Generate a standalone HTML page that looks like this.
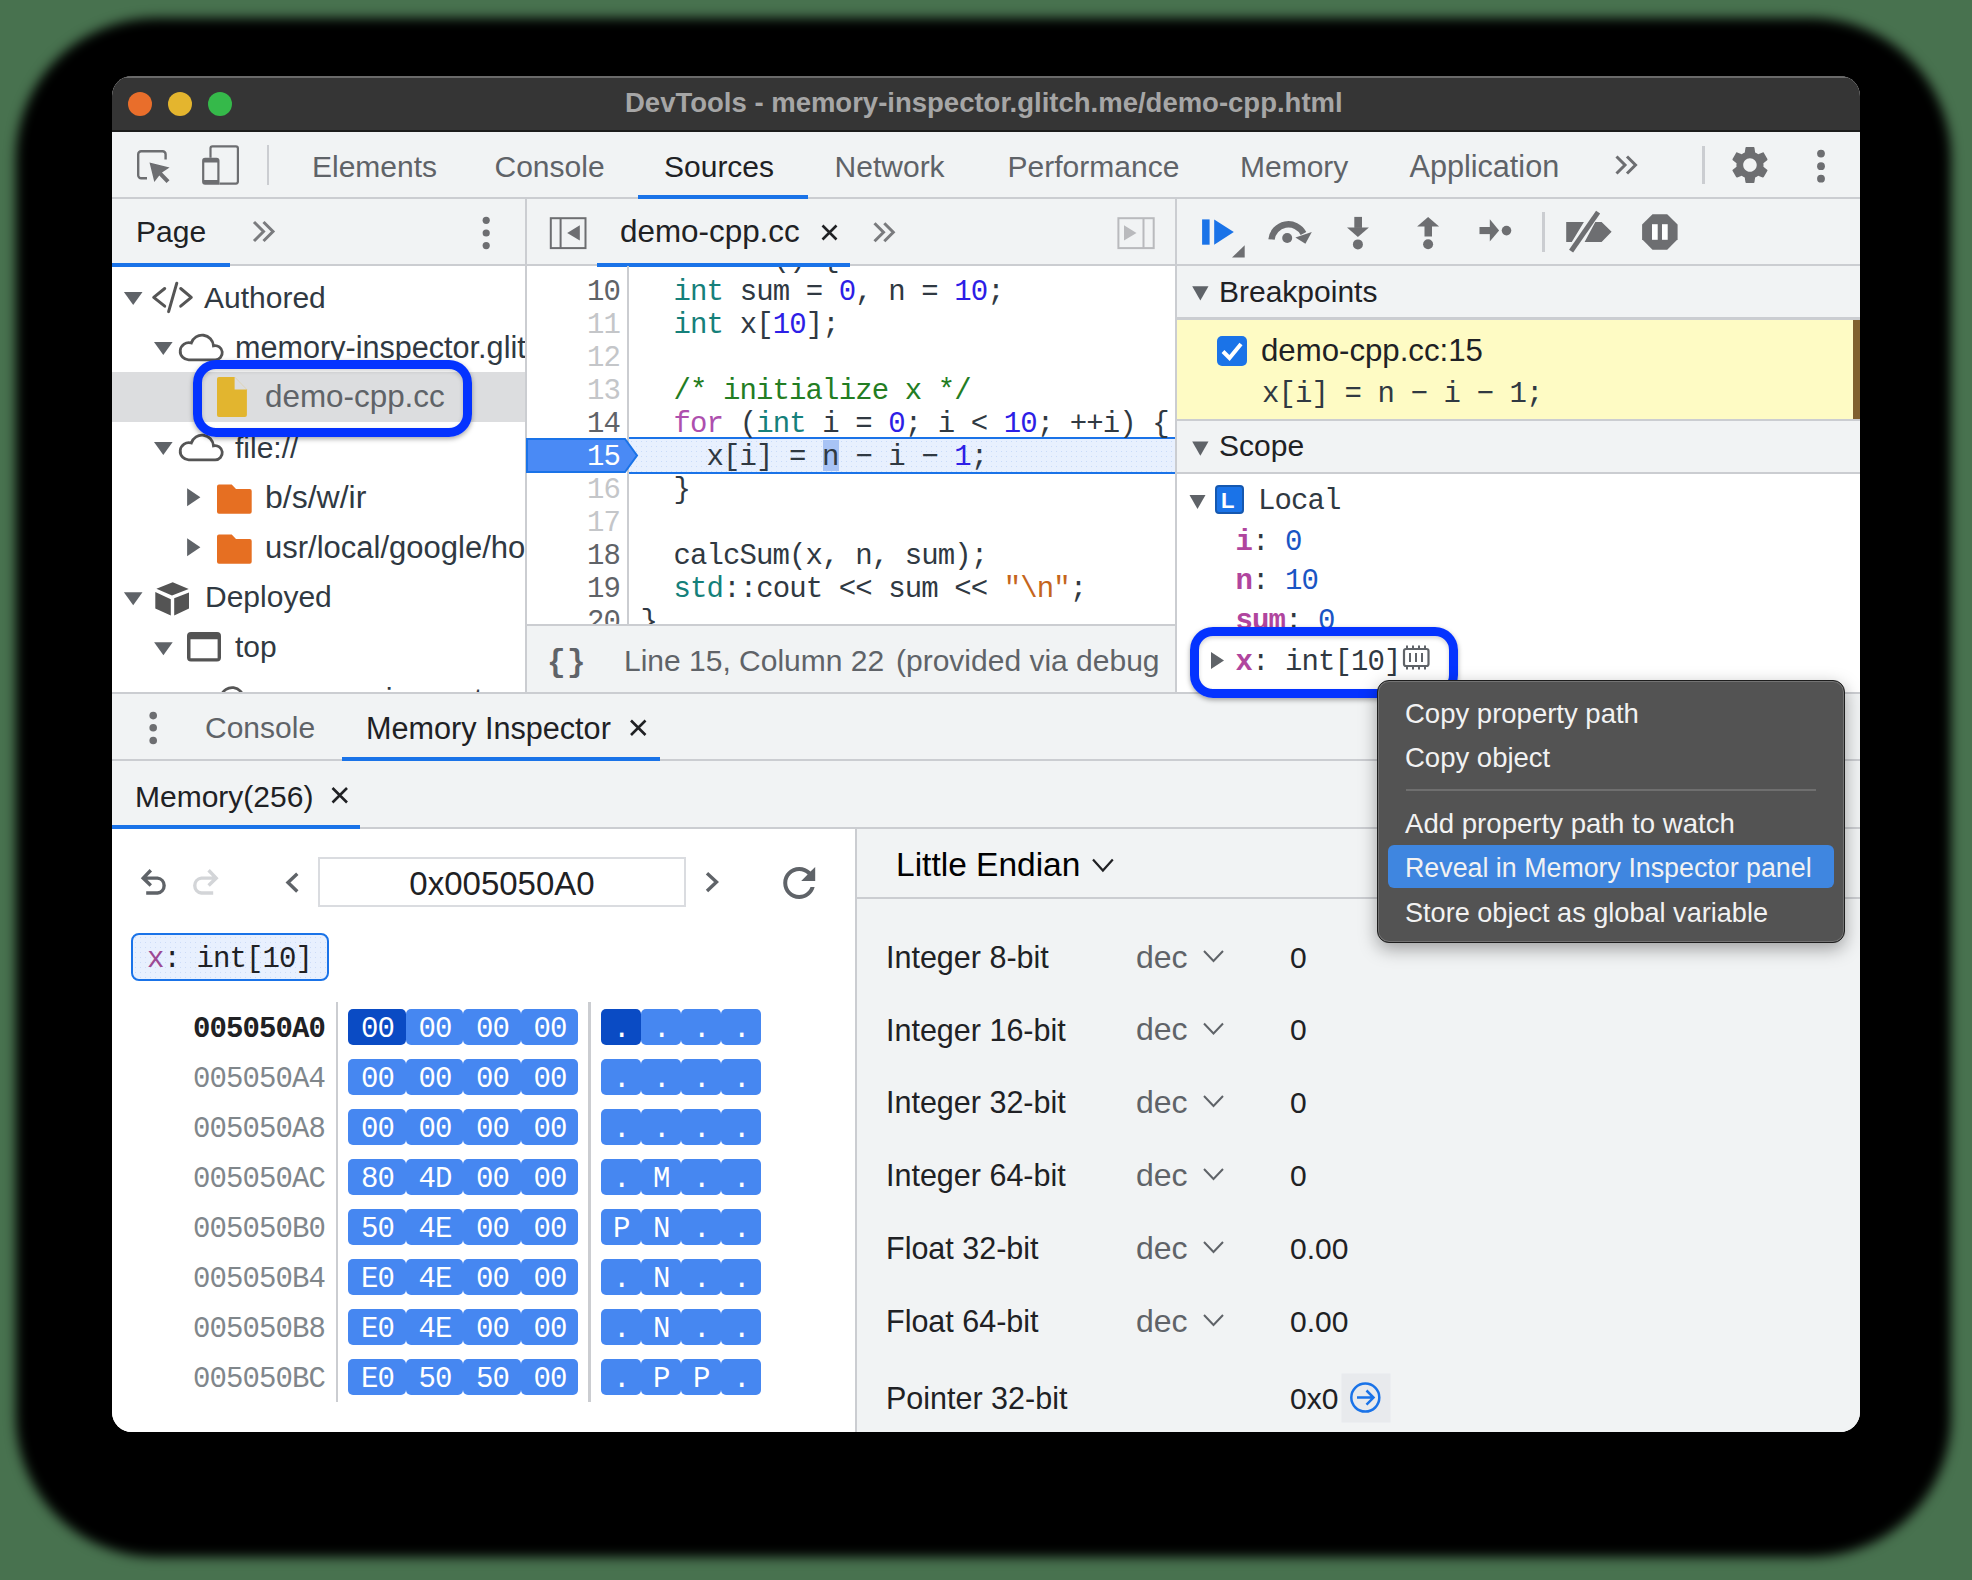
<!DOCTYPE html>
<html><head><meta charset="utf-8"><style>
html,body{margin:0;padding:0;}
body{width:1972px;height:1580px;overflow:hidden;background:#48724f;position:relative;}
body div{position:absolute;box-sizing:border-box;}
</style></head><body>
<div style="left:16px;top:18px;width:1935px;height:1539px;background:#000;border-radius:140px;filter:blur(6px)"></div><div style="left:112px;top:76px;width:1748px;height:1356px;border-radius:20px;overflow:hidden;background:#fff"><div style="left:-112px;top:-76px;width:1972px;height:1580px"><div style="left:112px;top:76px;width:1748px;height:56px;background:#353535"></div><div style="left:112px;top:76px;width:1748px;height:2px;background:#6a6a6a"></div><div style="left:112px;top:130px;width:1748px;height:2px;background:#1c1c1c"></div><div style="left:128px;top:92px;width:24px;height:24px;background:#e96e2b;border-radius:50%"></div><div style="left:168px;top:92px;width:24px;height:24px;background:#e4b52e;border-radius:50%"></div><div style="left:208px;top:92px;width:24px;height:24px;background:#35b94a;border-radius:50%"></div><div style="left:625px;top:88.72px;font:700 27.5px/27.5px 'Liberation Sans',sans-serif;color:#a6a6a6;white-space:pre;">DevTools - memory-inspector.glitch.me/demo-cpp.html</div><div style="left:112px;top:132px;width:1748px;height:67px;background:#f1f3f4"></div><div style="left:112px;top:197px;width:1748px;height:2px;background:#cbcdd1"></div><div style="left:312px;top:151.60px;font:400 30px/30px 'Liberation Sans',sans-serif;color:#5f6368;white-space:pre;">Elements</div><div style="left:494.5px;top:151.60px;font:400 30px/30px 'Liberation Sans',sans-serif;color:#5f6368;white-space:pre;">Console</div><div style="left:664px;top:151.60px;font:400 30px/30px 'Liberation Sans',sans-serif;color:#202124;white-space:pre;">Sources</div><div style="left:834.6px;top:151.60px;font:400 30px/30px 'Liberation Sans',sans-serif;color:#5f6368;white-space:pre;">Network</div><div style="left:1007.6px;top:151.60px;font:400 30px/30px 'Liberation Sans',sans-serif;color:#5f6368;white-space:pre;">Performance</div><div style="left:1240px;top:151.60px;font:400 30px/30px 'Liberation Sans',sans-serif;color:#5f6368;white-space:pre;">Memory</div><div style="left:1409.5px;top:151.10px;font:400 30.6px/30.6px 'Liberation Sans',sans-serif;color:#5f6368;white-space:pre;">Application</div><div style="left:637.5px;top:195px;width:170.5px;height:4px;background:#1a73e8"></div><div style="left:267px;top:145px;width:2px;height:40px;background:#cbcdd1"></div><div style="left:1702px;top:146px;width:3px;height:38px;background:#cbcdd1"></div><div style="left:112px;top:199px;width:1748px;height:494px;background:#fff"></div><div style="left:112px;top:199px;width:414px;height:67px;background:#f1f3f4"></div><div style="left:112px;top:264px;width:414px;height:2px;background:#cbcdd1"></div><div style="left:112px;top:263px;width:118px;height:4px;background:#1a73e8"></div><div style="left:136px;top:217.10px;font:400 30px/30px 'Liberation Sans',sans-serif;color:#202124;white-space:pre;">Page</div><div style="left:527px;top:199px;width:649px;height:67px;background:#f1f3f4"></div><div style="left:527px;top:264px;width:649px;height:2px;background:#cbcdd1"></div><div style="left:597px;top:263px;width:253px;height:4px;background:#1a73e8"></div><div style="left:620px;top:216.02px;font:400 31.4px/31.4px 'Liberation Sans',sans-serif;color:#202124;white-space:pre;">demo-cpp.cc</div><div style="left:525px;top:199px;width:2px;height:494px;background:#cbcdd1"></div><div style="left:1175px;top:199px;width:2px;height:494px;background:#cbcdd1"></div><div style="left:112px;top:372px;width:413px;height:50px;background:#dcdddf"></div><div style="left:204px;top:282.61px;font:400 30px/30px 'Liberation Sans',sans-serif;color:#303942;white-space:pre;">Authored</div><div style="left:112px;top:266px;width:413px;height:426px;overflow:hidden"><div style="left:-112px;top:-266px;width:1000px;height:1000px"><div style="left:235px;top:331.60px;font:400 30.6px/30.6px 'Liberation Sans',sans-serif;color:#303942;white-space:pre;">memory-inspector.glitch.me</div><div style="left:265px;top:684.10px;font:400 30.6px/30.6px 'Liberation Sans',sans-serif;color:#303942;white-space:pre;">memory-inspector.glitch.me</div></div></div><div style="left:265px;top:381.12px;font:400 31.4px/31.4px 'Liberation Sans',sans-serif;color:#5f6368;white-space:pre;">demo-cpp.cc</div><div style="left:235px;top:432.61px;font:400 30px/30px 'Liberation Sans',sans-serif;color:#303942;white-space:pre;">file://</div><div style="left:265px;top:480.91px;font:400 32px/32px 'Liberation Sans',sans-serif;color:#303942;white-space:pre;">b/s/w/ir</div><div style="left:112px;top:520px;width:413px;height:60px;overflow:hidden"><div style="left:-112px;top:-520px;width:1000px;height:1000px"><div style="left:265px;top:531.76px;font:400 31px/31px 'Liberation Sans',sans-serif;color:#303942;white-space:pre;">usr/local/google/home</div></div></div><div style="left:205px;top:582.00px;font:400 30px/30px 'Liberation Sans',sans-serif;color:#303942;white-space:pre;">Deployed</div><div style="left:235px;top:632.00px;font:400 30px/30px 'Liberation Sans',sans-serif;color:#303942;white-space:pre;">top</div><div style="left:527px;top:267px;width:648px;height:358px;overflow:hidden"><div style="left:-527px;top:-267px;width:1972px;height:1580px"><div style="left:629px;top:437.3px;width:546px;height:36.7px;background:#e8f0fe radial-gradient(circle,#c9dbf9 0.7px,transparent 1px) 0 0/5px 5px;border-top:2px solid #1a73e8;border-bottom:2px solid #1a73e8"></div><div style="left:822.6px;top:439.5px;width:16.5px;height:31px;background:#a8c3f5"></div><div style="left:603.5px;top:245.28px;font:400 29px/29px 'Liberation Mono',monospace;color:#5f6368;white-space:pre;letter-spacing:-0.9px;">9</div><div style="left:587.0px;top:278.28px;font:400 29px/29px 'Liberation Mono',monospace;color:#5f6368;white-space:pre;letter-spacing:-0.9px;">10</div><div style="left:587.0px;top:311.28px;font:400 29px/29px 'Liberation Mono',monospace;color:#c4c6c9;white-space:pre;letter-spacing:-0.9px;">11</div><div style="left:587.0px;top:344.28px;font:400 29px/29px 'Liberation Mono',monospace;color:#c4c6c9;white-space:pre;letter-spacing:-0.9px;">12</div><div style="left:587.0px;top:377.28px;font:400 29px/29px 'Liberation Mono',monospace;color:#c4c6c9;white-space:pre;letter-spacing:-0.9px;">13</div><div style="left:587.0px;top:410.28px;font:400 29px/29px 'Liberation Mono',monospace;color:#5f6368;white-space:pre;letter-spacing:-0.9px;">14</div><div style="left:587.0px;top:443.28px;font:400 29px/29px 'Liberation Mono',monospace;color:#ffffff;white-space:pre;letter-spacing:-0.9px;">15</div><div style="left:587.0px;top:476.28px;font:400 29px/29px 'Liberation Mono',monospace;color:#c4c6c9;white-space:pre;letter-spacing:-0.9px;">16</div><div style="left:587.0px;top:509.28px;font:400 29px/29px 'Liberation Mono',monospace;color:#c4c6c9;white-space:pre;letter-spacing:-0.9px;">17</div><div style="left:587.0px;top:542.28px;font:400 29px/29px 'Liberation Mono',monospace;color:#5f6368;white-space:pre;letter-spacing:-0.9px;">18</div><div style="left:587.0px;top:575.28px;font:400 29px/29px 'Liberation Mono',monospace;color:#5f6368;white-space:pre;letter-spacing:-0.9px;">19</div><div style="left:587.0px;top:608.28px;font:400 29px/29px 'Liberation Mono',monospace;color:#5f6368;white-space:pre;letter-spacing:-0.9px;">20</div><div style="left:640.6px;top:245.28px;font:400 29px/29px 'Liberation Mono',monospace;color:#303942;white-space:pre;letter-spacing:-0.9px;"><span style="color:#15807a">int</span><span style="color:#303942"> main() {</span></div><div style="left:640.6px;top:278.28px;font:400 29px/29px 'Liberation Mono',monospace;color:#303942;white-space:pre;letter-spacing:-0.9px;"><span style="color:#303942">  </span><span style="color:#15807a">int</span><span style="color:#303942"> sum = </span><span style="color:#2d1ee6">0</span><span style="color:#303942">, n = </span><span style="color:#2d1ee6">10</span><span style="color:#303942">;</span></div><div style="left:640.6px;top:311.28px;font:400 29px/29px 'Liberation Mono',monospace;color:#303942;white-space:pre;letter-spacing:-0.9px;"><span style="color:#303942">  </span><span style="color:#15807a">int</span><span style="color:#303942"> x[</span><span style="color:#2d1ee6">10</span><span style="color:#303942">];</span></div><div style="left:640.6px;top:377.28px;font:400 29px/29px 'Liberation Mono',monospace;color:#303942;white-space:pre;letter-spacing:-0.9px;"><span style="color:#237d23">  /* initialize x */</span></div><div style="left:640.6px;top:410.28px;font:400 29px/29px 'Liberation Mono',monospace;color:#303942;white-space:pre;letter-spacing:-0.9px;"><span style="color:#303942">  </span><span style="color:#ad4fae">for</span><span style="color:#303942"> (</span><span style="color:#15807a">int</span><span style="color:#303942"> i = </span><span style="color:#2d1ee6">0</span><span style="color:#303942">; i &lt; </span><span style="color:#2d1ee6">10</span><span style="color:#303942">; ++i) {</span></div><div style="left:640.6px;top:443.28px;font:400 29px/29px 'Liberation Mono',monospace;color:#303942;white-space:pre;letter-spacing:-0.9px;"><span style="color:#303942">    x[i] = n − i − </span><span style="color:#2d1ee6">1</span><span style="color:#303942">;</span></div><div style="left:640.6px;top:476.28px;font:400 29px/29px 'Liberation Mono',monospace;color:#303942;white-space:pre;letter-spacing:-0.9px;"><span style="color:#303942">  }</span></div><div style="left:640.6px;top:542.28px;font:400 29px/29px 'Liberation Mono',monospace;color:#303942;white-space:pre;letter-spacing:-0.9px;"><span style="color:#303942">  calcSum(x, n, sum);</span></div><div style="left:640.6px;top:575.28px;font:400 29px/29px 'Liberation Mono',monospace;color:#303942;white-space:pre;letter-spacing:-0.9px;"><span style="color:#303942">  </span><span style="color:#15807a">std</span><span style="color:#303942">::cout &lt;&lt; sum &lt;&lt; </span><span style="color:#c5651c">"\n"</span><span style="color:#303942">;</span></div><div style="left:640.6px;top:608.28px;font:400 29px/29px 'Liberation Mono',monospace;color:#303942;white-space:pre;letter-spacing:-0.9px;"><span style="color:#303942">}</span></div></div></div><div style="left:627px;top:266px;width:2px;height:359px;background:#cbcdd1"></div><svg style="position:absolute;left:0;top:0" width="1972" height="1580" viewBox="0 0 1972 1580"><path d="M527,439 H625 L637,455.5 L625,472 H527 Z" fill="#4a8af5" stroke="#1a73e8" stroke-width="2"/></svg><div style="left:527px;top:439px;width:100px;height:33px;overflow:hidden"><div style="left:-527px;top:-439px;width:1000px;height:1000px"><div style="left:587px;top:443.28px;font:400 29px/29px 'Liberation Mono',monospace;color:#ffffff;white-space:pre;letter-spacing:-0.9px;">15</div></div></div><div style="left:527px;top:625px;width:648px;height:68px;background:#f1f3f4"></div><div style="left:527px;top:624px;width:648px;height:2px;background:#cbcdd1"></div><div style="left:547px;top:647.25px;font:700 31px/31px 'Liberation Mono',monospace;color:#5f6368;white-space:pre;letter-spacing:1.4px;">{}</div><div style="left:624px;top:645.61px;font:400 30px/30px 'Liberation Sans',sans-serif;color:#5f6368;white-space:pre;">Line 15, Column 22</div><div style="left:896px;top:645.61px;font:400 30px/30px 'Liberation Sans',sans-serif;color:#5f6368;white-space:pre;">(provided via debug</div><div style="left:1177px;top:199px;width:683px;height:67px;background:#f1f3f4"></div><div style="left:1177px;top:264px;width:683px;height:2px;background:#cbcdd1"></div><div style="left:1177px;top:266px;width:683px;height:52px;background:#f1f3f4"></div><div style="left:1177px;top:317px;width:683px;height:3px;background:#cbcdd1"></div><div style="left:1177px;top:320px;width:683px;height:99px;background:#fefbc4"></div><div style="left:1853px;top:320px;width:7px;height:99px;background:#80602e"></div><div style="left:1177px;top:419px;width:683px;height:2px;background:#cbcdd1"></div><div style="left:1177px;top:421px;width:683px;height:51px;background:#f1f3f4"></div><div style="left:1177px;top:472px;width:683px;height:2px;background:#cbcdd1"></div><div style="left:1219px;top:277.11px;font:400 30px/30px 'Liberation Sans',sans-serif;color:#202124;white-space:pre;">Breakpoints</div><div style="left:1261px;top:334.89px;font:400 31.2px/31.2px 'Liberation Sans',sans-serif;color:#202124;white-space:pre;">demo-cpp.cc:15</div><div style="left:1262px;top:379.68px;font:400 29px/29px 'Liberation Mono',monospace;color:#303942;white-space:pre;letter-spacing:-0.9px;">x[i] = n − i − 1;</div><div style="left:1219px;top:431.31px;font:400 30px/30px 'Liberation Sans',sans-serif;color:#202124;white-space:pre;">Scope</div><div style="left:1217px;top:336px;width:30px;height:30px;background:#1a73e8;border-radius:5px"></div><svg style="position:absolute;left:0;top:0" width="1972" height="1580" viewBox="0 0 1972 1580"><path d="M1223,351.5 L1229.5,358 L1241,344" fill="none" stroke="#fff" stroke-width="4"/></svg><div style="left:1214.5px;top:484.5px;width:29px;height:29px;background:#1a73e8;border:2px solid #1558b0;border-radius:4px"></div><div style="left:1221px;top:490.38px;font:700 22px/22px 'Liberation Sans',sans-serif;color:#fff;white-space:pre;">L</div><div style="left:1258px;top:486.78px;font:400 29px/29px 'Liberation Mono',monospace;color:#303942;white-space:pre;letter-spacing:-0.9px;">Local</div><div style="left:1177px;top:681px;width:683px;height:2px;#cbcdd1"></div><div style="left:1177px;top:683px;width:683px;height:9px;#f1f3f4"></div><div style="left:1235.5px;top:527.78px;font:400 29px/29px 'Liberation Mono',monospace;color:#303942;white-space:pre;letter-spacing:-0.9px;"><span style="color:#b0459e;font-weight:700">i</span>: <span style="color:#1a55c4">0</span></div><div style="left:1235.5px;top:567.48px;font:400 29px/29px 'Liberation Mono',monospace;color:#303942;white-space:pre;letter-spacing:-0.9px;"><span style="color:#b0459e;font-weight:700">n</span>: <span style="color:#1a55c4">10</span></div><div style="left:1235.5px;top:607.18px;font:400 29px/29px 'Liberation Mono',monospace;color:#303942;white-space:pre;letter-spacing:-0.9px;"><span style="color:#b0459e;font-weight:700">sum</span>: <span style="color:#1a55c4">0</span></div><div style="left:1235.5px;top:648.48px;font:400 29px/29px 'Liberation Mono',monospace;color:#303942;white-space:pre;letter-spacing:-0.9px;"><span style="color:#b0459e;font-weight:700">x</span>: int[10]</div><div style="left:112px;top:692px;width:1748px;height:2px;background:#cbcdd1"></div><div style="left:112px;top:694px;width:1748px;height:67px;background:#f1f3f4"></div><div style="left:112px;top:759px;width:1748px;height:2px;background:#cbcdd1"></div><div style="left:342px;top:757px;width:318px;height:4px;background:#1a73e8"></div><div style="left:205px;top:713.00px;font:400 30px/30px 'Liberation Sans',sans-serif;color:#5f6368;white-space:pre;">Console</div><div style="left:366px;top:712.50px;font:400 30.6px/30.6px 'Liberation Sans',sans-serif;color:#202124;white-space:pre;">Memory Inspector</div><div style="left:112px;top:761px;width:1748px;height:67px;background:#f1f3f4"></div><div style="left:112px;top:827px;width:1748px;height:2px;background:#cbcdd1"></div><div style="left:112px;top:825px;width:248px;height:4px;background:#1a73e8"></div><div style="left:135px;top:781.50px;font:400 30px/30px 'Liberation Sans',sans-serif;color:#202124;white-space:pre;">Memory(256)</div><div style="left:112px;top:829px;width:743px;height:603px;background:#fff"></div><div style="left:855px;top:829px;width:2px;height:603px;background:#cbcdd1"></div><div style="left:857px;top:829px;width:1003px;height:603px;background:#f1f3f4"></div><div style="left:857px;top:897px;width:1003px;height:2px;background:#cbcdd1"></div><div style="left:896px;top:847.74px;font:400 33.5px/33.5px 'Liberation Sans',sans-serif;color:#000000;white-space:pre;">Little Endian</div><div style="left:318px;top:857px;width:368px;height:50px;border:2px solid #dadce0;background:#fff"></div><div style="left:318px;top:866.5px;width:368px;text-align:center;font:400 33px/33px 'Liberation Sans',sans-serif;color:#202124">0x005050A0</div><div style="left:130.5px;top:932.5px;width:198.5px;height:48.5px;background:#e8f0fe radial-gradient(circle,#cddcf8 0.7px,transparent 1px) 0 0/5px 5px;border:2px solid #1a73e8;border-radius:8px"></div><div style="left:147px;top:945.18px;font:400 29px/29px 'Liberation Mono',monospace;color:#202124;white-space:pre;letter-spacing:-0.9px;"><span style="color:#9c4a94">x</span>: int[10]</div><div style="left:336px;top:1002px;width:2px;height:400px;background:#cbcdd1"></div><div style="left:588px;top:1002px;width:3px;height:400px;background:#cbcdd1"></div><div style="left:193px;top:1015.28px;font:700 29px/29px 'Liberation Mono',monospace;color:#202124;white-space:pre;letter-spacing:-0.9px;">005050A0</div><div style="left:348.0px;top:1009.3px;width:57.5px;height:36px;background:#0a4bc4;border-radius:5px"></div><div style="left:361.0px;top:1015.28px;font:400 29px/29px 'Liberation Mono',monospace;color:#ffffff;white-space:pre;letter-spacing:-0.9px;">00</div><div style="left:405.5px;top:1009.3px;width:57.5px;height:36px;background:#4687f1;border-radius:5px"></div><div style="left:418.5px;top:1015.28px;font:400 29px/29px 'Liberation Mono',monospace;color:#ffffff;white-space:pre;letter-spacing:-0.9px;">00</div><div style="left:463.0px;top:1009.3px;width:57.5px;height:36px;background:#4687f1;border-radius:5px"></div><div style="left:476.0px;top:1015.28px;font:400 29px/29px 'Liberation Mono',monospace;color:#ffffff;white-space:pre;letter-spacing:-0.9px;">00</div><div style="left:520.5px;top:1009.3px;width:57.5px;height:36px;background:#4687f1;border-radius:5px"></div><div style="left:533.5px;top:1015.28px;font:400 29px/29px 'Liberation Mono',monospace;color:#ffffff;white-space:pre;letter-spacing:-0.9px;">00</div><div style="left:601px;top:1009.3px;width:40px;height:36px;background:#0a4bc4;border-radius:5px"></div><div style="left:613px;top:1015.28px;font:400 29px/29px 'Liberation Mono',monospace;color:#ffffff;white-space:pre;letter-spacing:-0.9px;">.</div><div style="left:641px;top:1009.3px;width:40px;height:36px;background:#4687f1;border-radius:5px"></div><div style="left:653px;top:1015.28px;font:400 29px/29px 'Liberation Mono',monospace;color:#ffffff;white-space:pre;letter-spacing:-0.9px;">.</div><div style="left:681px;top:1009.3px;width:40px;height:36px;background:#4687f1;border-radius:5px"></div><div style="left:693px;top:1015.28px;font:400 29px/29px 'Liberation Mono',monospace;color:#ffffff;white-space:pre;letter-spacing:-0.9px;">.</div><div style="left:721px;top:1009.3px;width:40px;height:36px;background:#4687f1;border-radius:5px"></div><div style="left:733px;top:1015.28px;font:400 29px/29px 'Liberation Mono',monospace;color:#ffffff;white-space:pre;letter-spacing:-0.9px;">.</div><div style="left:193px;top:1065.28px;font:400 29px/29px 'Liberation Mono',monospace;color:#80868b;white-space:pre;letter-spacing:-0.9px;">005050A4</div><div style="left:348.0px;top:1059.3px;width:57.5px;height:36px;background:#4687f1;border-radius:5px"></div><div style="left:361.0px;top:1065.28px;font:400 29px/29px 'Liberation Mono',monospace;color:#ffffff;white-space:pre;letter-spacing:-0.9px;">00</div><div style="left:405.5px;top:1059.3px;width:57.5px;height:36px;background:#4687f1;border-radius:5px"></div><div style="left:418.5px;top:1065.28px;font:400 29px/29px 'Liberation Mono',monospace;color:#ffffff;white-space:pre;letter-spacing:-0.9px;">00</div><div style="left:463.0px;top:1059.3px;width:57.5px;height:36px;background:#4687f1;border-radius:5px"></div><div style="left:476.0px;top:1065.28px;font:400 29px/29px 'Liberation Mono',monospace;color:#ffffff;white-space:pre;letter-spacing:-0.9px;">00</div><div style="left:520.5px;top:1059.3px;width:57.5px;height:36px;background:#4687f1;border-radius:5px"></div><div style="left:533.5px;top:1065.28px;font:400 29px/29px 'Liberation Mono',monospace;color:#ffffff;white-space:pre;letter-spacing:-0.9px;">00</div><div style="left:601px;top:1059.3px;width:40px;height:36px;background:#4687f1;border-radius:5px"></div><div style="left:613px;top:1065.28px;font:400 29px/29px 'Liberation Mono',monospace;color:#ffffff;white-space:pre;letter-spacing:-0.9px;">.</div><div style="left:641px;top:1059.3px;width:40px;height:36px;background:#4687f1;border-radius:5px"></div><div style="left:653px;top:1065.28px;font:400 29px/29px 'Liberation Mono',monospace;color:#ffffff;white-space:pre;letter-spacing:-0.9px;">.</div><div style="left:681px;top:1059.3px;width:40px;height:36px;background:#4687f1;border-radius:5px"></div><div style="left:693px;top:1065.28px;font:400 29px/29px 'Liberation Mono',monospace;color:#ffffff;white-space:pre;letter-spacing:-0.9px;">.</div><div style="left:721px;top:1059.3px;width:40px;height:36px;background:#4687f1;border-radius:5px"></div><div style="left:733px;top:1065.28px;font:400 29px/29px 'Liberation Mono',monospace;color:#ffffff;white-space:pre;letter-spacing:-0.9px;">.</div><div style="left:193px;top:1115.28px;font:400 29px/29px 'Liberation Mono',monospace;color:#80868b;white-space:pre;letter-spacing:-0.9px;">005050A8</div><div style="left:348.0px;top:1109.3px;width:57.5px;height:36px;background:#4687f1;border-radius:5px"></div><div style="left:361.0px;top:1115.28px;font:400 29px/29px 'Liberation Mono',monospace;color:#ffffff;white-space:pre;letter-spacing:-0.9px;">00</div><div style="left:405.5px;top:1109.3px;width:57.5px;height:36px;background:#4687f1;border-radius:5px"></div><div style="left:418.5px;top:1115.28px;font:400 29px/29px 'Liberation Mono',monospace;color:#ffffff;white-space:pre;letter-spacing:-0.9px;">00</div><div style="left:463.0px;top:1109.3px;width:57.5px;height:36px;background:#4687f1;border-radius:5px"></div><div style="left:476.0px;top:1115.28px;font:400 29px/29px 'Liberation Mono',monospace;color:#ffffff;white-space:pre;letter-spacing:-0.9px;">00</div><div style="left:520.5px;top:1109.3px;width:57.5px;height:36px;background:#4687f1;border-radius:5px"></div><div style="left:533.5px;top:1115.28px;font:400 29px/29px 'Liberation Mono',monospace;color:#ffffff;white-space:pre;letter-spacing:-0.9px;">00</div><div style="left:601px;top:1109.3px;width:40px;height:36px;background:#4687f1;border-radius:5px"></div><div style="left:613px;top:1115.28px;font:400 29px/29px 'Liberation Mono',monospace;color:#ffffff;white-space:pre;letter-spacing:-0.9px;">.</div><div style="left:641px;top:1109.3px;width:40px;height:36px;background:#4687f1;border-radius:5px"></div><div style="left:653px;top:1115.28px;font:400 29px/29px 'Liberation Mono',monospace;color:#ffffff;white-space:pre;letter-spacing:-0.9px;">.</div><div style="left:681px;top:1109.3px;width:40px;height:36px;background:#4687f1;border-radius:5px"></div><div style="left:693px;top:1115.28px;font:400 29px/29px 'Liberation Mono',monospace;color:#ffffff;white-space:pre;letter-spacing:-0.9px;">.</div><div style="left:721px;top:1109.3px;width:40px;height:36px;background:#4687f1;border-radius:5px"></div><div style="left:733px;top:1115.28px;font:400 29px/29px 'Liberation Mono',monospace;color:#ffffff;white-space:pre;letter-spacing:-0.9px;">.</div><div style="left:193px;top:1165.28px;font:400 29px/29px 'Liberation Mono',monospace;color:#80868b;white-space:pre;letter-spacing:-0.9px;">005050AC</div><div style="left:348.0px;top:1159.3px;width:57.5px;height:36px;background:#4687f1;border-radius:5px"></div><div style="left:361.0px;top:1165.28px;font:400 29px/29px 'Liberation Mono',monospace;color:#ffffff;white-space:pre;letter-spacing:-0.9px;">80</div><div style="left:405.5px;top:1159.3px;width:57.5px;height:36px;background:#4687f1;border-radius:5px"></div><div style="left:418.5px;top:1165.28px;font:400 29px/29px 'Liberation Mono',monospace;color:#ffffff;white-space:pre;letter-spacing:-0.9px;">4D</div><div style="left:463.0px;top:1159.3px;width:57.5px;height:36px;background:#4687f1;border-radius:5px"></div><div style="left:476.0px;top:1165.28px;font:400 29px/29px 'Liberation Mono',monospace;color:#ffffff;white-space:pre;letter-spacing:-0.9px;">00</div><div style="left:520.5px;top:1159.3px;width:57.5px;height:36px;background:#4687f1;border-radius:5px"></div><div style="left:533.5px;top:1165.28px;font:400 29px/29px 'Liberation Mono',monospace;color:#ffffff;white-space:pre;letter-spacing:-0.9px;">00</div><div style="left:601px;top:1159.3px;width:40px;height:36px;background:#4687f1;border-radius:5px"></div><div style="left:613px;top:1165.28px;font:400 29px/29px 'Liberation Mono',monospace;color:#ffffff;white-space:pre;letter-spacing:-0.9px;">.</div><div style="left:641px;top:1159.3px;width:40px;height:36px;background:#4687f1;border-radius:5px"></div><div style="left:653px;top:1165.28px;font:400 29px/29px 'Liberation Mono',monospace;color:#ffffff;white-space:pre;letter-spacing:-0.9px;">M</div><div style="left:681px;top:1159.3px;width:40px;height:36px;background:#4687f1;border-radius:5px"></div><div style="left:693px;top:1165.28px;font:400 29px/29px 'Liberation Mono',monospace;color:#ffffff;white-space:pre;letter-spacing:-0.9px;">.</div><div style="left:721px;top:1159.3px;width:40px;height:36px;background:#4687f1;border-radius:5px"></div><div style="left:733px;top:1165.28px;font:400 29px/29px 'Liberation Mono',monospace;color:#ffffff;white-space:pre;letter-spacing:-0.9px;">.</div><div style="left:193px;top:1215.28px;font:400 29px/29px 'Liberation Mono',monospace;color:#80868b;white-space:pre;letter-spacing:-0.9px;">005050B0</div><div style="left:348.0px;top:1209.3px;width:57.5px;height:36px;background:#4687f1;border-radius:5px"></div><div style="left:361.0px;top:1215.28px;font:400 29px/29px 'Liberation Mono',monospace;color:#ffffff;white-space:pre;letter-spacing:-0.9px;">50</div><div style="left:405.5px;top:1209.3px;width:57.5px;height:36px;background:#4687f1;border-radius:5px"></div><div style="left:418.5px;top:1215.28px;font:400 29px/29px 'Liberation Mono',monospace;color:#ffffff;white-space:pre;letter-spacing:-0.9px;">4E</div><div style="left:463.0px;top:1209.3px;width:57.5px;height:36px;background:#4687f1;border-radius:5px"></div><div style="left:476.0px;top:1215.28px;font:400 29px/29px 'Liberation Mono',monospace;color:#ffffff;white-space:pre;letter-spacing:-0.9px;">00</div><div style="left:520.5px;top:1209.3px;width:57.5px;height:36px;background:#4687f1;border-radius:5px"></div><div style="left:533.5px;top:1215.28px;font:400 29px/29px 'Liberation Mono',monospace;color:#ffffff;white-space:pre;letter-spacing:-0.9px;">00</div><div style="left:601px;top:1209.3px;width:40px;height:36px;background:#4687f1;border-radius:5px"></div><div style="left:613px;top:1215.28px;font:400 29px/29px 'Liberation Mono',monospace;color:#ffffff;white-space:pre;letter-spacing:-0.9px;">P</div><div style="left:641px;top:1209.3px;width:40px;height:36px;background:#4687f1;border-radius:5px"></div><div style="left:653px;top:1215.28px;font:400 29px/29px 'Liberation Mono',monospace;color:#ffffff;white-space:pre;letter-spacing:-0.9px;">N</div><div style="left:681px;top:1209.3px;width:40px;height:36px;background:#4687f1;border-radius:5px"></div><div style="left:693px;top:1215.28px;font:400 29px/29px 'Liberation Mono',monospace;color:#ffffff;white-space:pre;letter-spacing:-0.9px;">.</div><div style="left:721px;top:1209.3px;width:40px;height:36px;background:#4687f1;border-radius:5px"></div><div style="left:733px;top:1215.28px;font:400 29px/29px 'Liberation Mono',monospace;color:#ffffff;white-space:pre;letter-spacing:-0.9px;">.</div><div style="left:193px;top:1265.28px;font:400 29px/29px 'Liberation Mono',monospace;color:#80868b;white-space:pre;letter-spacing:-0.9px;">005050B4</div><div style="left:348.0px;top:1259.3px;width:57.5px;height:36px;background:#4687f1;border-radius:5px"></div><div style="left:361.0px;top:1265.28px;font:400 29px/29px 'Liberation Mono',monospace;color:#ffffff;white-space:pre;letter-spacing:-0.9px;">E0</div><div style="left:405.5px;top:1259.3px;width:57.5px;height:36px;background:#4687f1;border-radius:5px"></div><div style="left:418.5px;top:1265.28px;font:400 29px/29px 'Liberation Mono',monospace;color:#ffffff;white-space:pre;letter-spacing:-0.9px;">4E</div><div style="left:463.0px;top:1259.3px;width:57.5px;height:36px;background:#4687f1;border-radius:5px"></div><div style="left:476.0px;top:1265.28px;font:400 29px/29px 'Liberation Mono',monospace;color:#ffffff;white-space:pre;letter-spacing:-0.9px;">00</div><div style="left:520.5px;top:1259.3px;width:57.5px;height:36px;background:#4687f1;border-radius:5px"></div><div style="left:533.5px;top:1265.28px;font:400 29px/29px 'Liberation Mono',monospace;color:#ffffff;white-space:pre;letter-spacing:-0.9px;">00</div><div style="left:601px;top:1259.3px;width:40px;height:36px;background:#4687f1;border-radius:5px"></div><div style="left:613px;top:1265.28px;font:400 29px/29px 'Liberation Mono',monospace;color:#ffffff;white-space:pre;letter-spacing:-0.9px;">.</div><div style="left:641px;top:1259.3px;width:40px;height:36px;background:#4687f1;border-radius:5px"></div><div style="left:653px;top:1265.28px;font:400 29px/29px 'Liberation Mono',monospace;color:#ffffff;white-space:pre;letter-spacing:-0.9px;">N</div><div style="left:681px;top:1259.3px;width:40px;height:36px;background:#4687f1;border-radius:5px"></div><div style="left:693px;top:1265.28px;font:400 29px/29px 'Liberation Mono',monospace;color:#ffffff;white-space:pre;letter-spacing:-0.9px;">.</div><div style="left:721px;top:1259.3px;width:40px;height:36px;background:#4687f1;border-radius:5px"></div><div style="left:733px;top:1265.28px;font:400 29px/29px 'Liberation Mono',monospace;color:#ffffff;white-space:pre;letter-spacing:-0.9px;">.</div><div style="left:193px;top:1315.28px;font:400 29px/29px 'Liberation Mono',monospace;color:#80868b;white-space:pre;letter-spacing:-0.9px;">005050B8</div><div style="left:348.0px;top:1309.3px;width:57.5px;height:36px;background:#4687f1;border-radius:5px"></div><div style="left:361.0px;top:1315.28px;font:400 29px/29px 'Liberation Mono',monospace;color:#ffffff;white-space:pre;letter-spacing:-0.9px;">E0</div><div style="left:405.5px;top:1309.3px;width:57.5px;height:36px;background:#4687f1;border-radius:5px"></div><div style="left:418.5px;top:1315.28px;font:400 29px/29px 'Liberation Mono',monospace;color:#ffffff;white-space:pre;letter-spacing:-0.9px;">4E</div><div style="left:463.0px;top:1309.3px;width:57.5px;height:36px;background:#4687f1;border-radius:5px"></div><div style="left:476.0px;top:1315.28px;font:400 29px/29px 'Liberation Mono',monospace;color:#ffffff;white-space:pre;letter-spacing:-0.9px;">00</div><div style="left:520.5px;top:1309.3px;width:57.5px;height:36px;background:#4687f1;border-radius:5px"></div><div style="left:533.5px;top:1315.28px;font:400 29px/29px 'Liberation Mono',monospace;color:#ffffff;white-space:pre;letter-spacing:-0.9px;">00</div><div style="left:601px;top:1309.3px;width:40px;height:36px;background:#4687f1;border-radius:5px"></div><div style="left:613px;top:1315.28px;font:400 29px/29px 'Liberation Mono',monospace;color:#ffffff;white-space:pre;letter-spacing:-0.9px;">.</div><div style="left:641px;top:1309.3px;width:40px;height:36px;background:#4687f1;border-radius:5px"></div><div style="left:653px;top:1315.28px;font:400 29px/29px 'Liberation Mono',monospace;color:#ffffff;white-space:pre;letter-spacing:-0.9px;">N</div><div style="left:681px;top:1309.3px;width:40px;height:36px;background:#4687f1;border-radius:5px"></div><div style="left:693px;top:1315.28px;font:400 29px/29px 'Liberation Mono',monospace;color:#ffffff;white-space:pre;letter-spacing:-0.9px;">.</div><div style="left:721px;top:1309.3px;width:40px;height:36px;background:#4687f1;border-radius:5px"></div><div style="left:733px;top:1315.28px;font:400 29px/29px 'Liberation Mono',monospace;color:#ffffff;white-space:pre;letter-spacing:-0.9px;">.</div><div style="left:193px;top:1365.28px;font:400 29px/29px 'Liberation Mono',monospace;color:#80868b;white-space:pre;letter-spacing:-0.9px;">005050BC</div><div style="left:348.0px;top:1359.3px;width:57.5px;height:36px;background:#4687f1;border-radius:5px"></div><div style="left:361.0px;top:1365.28px;font:400 29px/29px 'Liberation Mono',monospace;color:#ffffff;white-space:pre;letter-spacing:-0.9px;">E0</div><div style="left:405.5px;top:1359.3px;width:57.5px;height:36px;background:#4687f1;border-radius:5px"></div><div style="left:418.5px;top:1365.28px;font:400 29px/29px 'Liberation Mono',monospace;color:#ffffff;white-space:pre;letter-spacing:-0.9px;">50</div><div style="left:463.0px;top:1359.3px;width:57.5px;height:36px;background:#4687f1;border-radius:5px"></div><div style="left:476.0px;top:1365.28px;font:400 29px/29px 'Liberation Mono',monospace;color:#ffffff;white-space:pre;letter-spacing:-0.9px;">50</div><div style="left:520.5px;top:1359.3px;width:57.5px;height:36px;background:#4687f1;border-radius:5px"></div><div style="left:533.5px;top:1365.28px;font:400 29px/29px 'Liberation Mono',monospace;color:#ffffff;white-space:pre;letter-spacing:-0.9px;">00</div><div style="left:601px;top:1359.3px;width:40px;height:36px;background:#4687f1;border-radius:5px"></div><div style="left:613px;top:1365.28px;font:400 29px/29px 'Liberation Mono',monospace;color:#ffffff;white-space:pre;letter-spacing:-0.9px;">.</div><div style="left:641px;top:1359.3px;width:40px;height:36px;background:#4687f1;border-radius:5px"></div><div style="left:653px;top:1365.28px;font:400 29px/29px 'Liberation Mono',monospace;color:#ffffff;white-space:pre;letter-spacing:-0.9px;">P</div><div style="left:681px;top:1359.3px;width:40px;height:36px;background:#4687f1;border-radius:5px"></div><div style="left:693px;top:1365.28px;font:400 29px/29px 'Liberation Mono',monospace;color:#ffffff;white-space:pre;letter-spacing:-0.9px;">P</div><div style="left:721px;top:1359.3px;width:40px;height:36px;background:#4687f1;border-radius:5px"></div><div style="left:733px;top:1365.28px;font:400 29px/29px 'Liberation Mono',monospace;color:#ffffff;white-space:pre;letter-spacing:-0.9px;">.</div><div style="left:886px;top:942.18px;font:400 30.5px/30.5px 'Liberation Sans',sans-serif;color:#202124;white-space:pre;">Integer 8-bit</div><div style="left:1136px;top:940.91px;font:400 32px/32px 'Liberation Sans',sans-serif;color:#5f6368;white-space:pre;">dec</div><div style="left:1290px;top:942.61px;font:400 30px/30px 'Liberation Sans',sans-serif;color:#202124;white-space:pre;">0</div><div style="left:886px;top:1014.68px;font:400 30.5px/30.5px 'Liberation Sans',sans-serif;color:#202124;white-space:pre;">Integer 16-bit</div><div style="left:1136px;top:1013.41px;font:400 32px/32px 'Liberation Sans',sans-serif;color:#5f6368;white-space:pre;">dec</div><div style="left:1290px;top:1015.11px;font:400 30px/30px 'Liberation Sans',sans-serif;color:#202124;white-space:pre;">0</div><div style="left:886px;top:1087.18px;font:400 30.5px/30.5px 'Liberation Sans',sans-serif;color:#202124;white-space:pre;">Integer 32-bit</div><div style="left:1136px;top:1085.91px;font:400 32px/32px 'Liberation Sans',sans-serif;color:#5f6368;white-space:pre;">dec</div><div style="left:1290px;top:1087.61px;font:400 30px/30px 'Liberation Sans',sans-serif;color:#202124;white-space:pre;">0</div><div style="left:886px;top:1160.18px;font:400 30.5px/30.5px 'Liberation Sans',sans-serif;color:#202124;white-space:pre;">Integer 64-bit</div><div style="left:1136px;top:1158.91px;font:400 32px/32px 'Liberation Sans',sans-serif;color:#5f6368;white-space:pre;">dec</div><div style="left:1290px;top:1160.61px;font:400 30px/30px 'Liberation Sans',sans-serif;color:#202124;white-space:pre;">0</div><div style="left:886px;top:1233.18px;font:400 30.5px/30.5px 'Liberation Sans',sans-serif;color:#202124;white-space:pre;">Float 32-bit</div><div style="left:1136px;top:1231.91px;font:400 32px/32px 'Liberation Sans',sans-serif;color:#5f6368;white-space:pre;">dec</div><div style="left:1290px;top:1233.61px;font:400 30px/30px 'Liberation Sans',sans-serif;color:#202124;white-space:pre;">0.00</div><div style="left:886px;top:1306.18px;font:400 30.5px/30.5px 'Liberation Sans',sans-serif;color:#202124;white-space:pre;">Float 64-bit</div><div style="left:1136px;top:1304.91px;font:400 32px/32px 'Liberation Sans',sans-serif;color:#5f6368;white-space:pre;">dec</div><div style="left:1290px;top:1306.61px;font:400 30px/30px 'Liberation Sans',sans-serif;color:#202124;white-space:pre;">0.00</div><div style="left:886px;top:1383.18px;font:400 30.5px/30.5px 'Liberation Sans',sans-serif;color:#202124;white-space:pre;">Pointer 32-bit</div><div style="left:1290px;top:1383.61px;font:400 30px/30px 'Liberation Sans',sans-serif;color:#202124;white-space:pre;">0x0</div><svg style="position:absolute;left:0;top:0" width="1972" height="1580" viewBox="0 0 1972 1580"><path d="M147,178.2 H141.2 a3,3 0 0 1 -3,-3 V154.3 a3,3 0 0 1 3,-3 H162.6 a3,3 0 0 1 3,3 V159.6" fill="none" stroke="#6d6e71" stroke-width="2.4"/><path d="M149.5,162.5 L169.6,167.4 L162,172.6 L169.5,180.2 L166.5,183 L159.3,175.6 L154.3,182 Z" fill="#6d6e71"/><path d="M210.5,157.7 V148.3 a2,2 0 0 1 2,-2 H235.9 a2,2 0 0 1 2,2 V181.6 a2,2 0 0 1 -2,2 H219.5" fill="none" stroke="#6d6e71" stroke-width="2.2"/><path d="M205.1,157.7 H216.5 a3,3 0 0 1 3,3 V184.7 H205.1 a3,3 0 0 1 -3,-3 V160.7 a3,3 0 0 1 3,-3 Z M204.3,162.4 V179.9 H217.3 V162.4 Z" fill="#6d6e71" fill-rule="evenodd"/><path d="M1616.5,156.5 L1625.0,165 L1616.5,173.5 M1627.0,156.5 L1635.5,165 L1627.0,173.5" fill="none" stroke="#6d6e71" stroke-width="3"/><path transform="translate(1727.4,142.4) scale(1.88)" d="M19.14 12.94c.04-.3.06-.61.06-.94 0-.32-.02-.64-.07-.94l2.03-1.58c.18-.14.23-.41.12-.61l-1.92-3.32c-.12-.22-.37-.29-.59-.22l-2.39.96c-.5-.38-1.030-.7-1.62-.94l-.36-2.54c-.04-.24-.24-.41-.48-.41h-3.84c-.24 0-.43.17-.47.41l-.36 2.54c-.59.24-1.13.57-1.62.94l-2.390-.96c-.22-.08-.47 0-.59.22L2.74 8.87c-.12.21-.08.47.12.61l2.03 1.58c-.05.3-.09.63-.09.94s.02.64.07.94l-2.03 1.58c-.18.14-.23.41-.12.61l1.92 3.32c.12.22.37.29.59.22l2.39-.96c.5.38 1.03.7 1.62.94l.36 2.54c.05.24.24.41.48.41h3.84c.24 0 .44-.17.47-.41l.36-2.54c.59-.24 1.13-.56 1.62-.94l2.39.96c.22.08.47 0 .59-.22l1.92-3.32c.12-.22.07-.47-.12-.61l-2.01-1.58zM12 15.6c-1.98 0-3.6-1.62-3.6-3.6s1.62-3.6 3.6-3.6 3.6 1.62 3.6 3.6-1.62 3.6-3.6 3.6z" fill="#6d6e71" fill-rule="evenodd"/><circle cx="1821" cy="153.6" r="3.9" fill="#6d6e71"/><circle cx="1821" cy="166.2" r="3.9" fill="#6d6e71"/><circle cx="1821" cy="178.7" r="3.9" fill="#6d6e71"/><path d="M254,222.0 L263.5,231.5 L254,241.0 M263.5,222.0 L273.0,231.5 L263.5,241.0" fill="none" stroke="#7a7b7e" stroke-width="3"/><circle cx="486.2" cy="220.3" r="3.6" fill="#6d6e71"/><circle cx="486.2" cy="233" r="3.6" fill="#6d6e71"/><circle cx="486.2" cy="245.6" r="3.6" fill="#6d6e71"/><rect x="550.8" y="218.2" width="34.7" height="29.9" fill="none" stroke="#6d6e71" stroke-width="2"/><path d="M560.6,218 V248" stroke="#6d6e71" stroke-width="2"/><path d="M567.2,233.1 L579.8,225.3 V240.6 Z" fill="#6d6e71"/><rect x="1118.4" y="218.2" width="35.3" height="29.9" fill="none" stroke="#b9babd" stroke-width="2"/><path d="M1143.5,218 V248" stroke="#b9babd" stroke-width="2"/><path d="M1136.5,233.1 L1124,225.3 V240.6 Z" fill="#b9babd"/><path d="M822.5,225.5 L836.5,239.5 M836.5,225.5 L822.5,239.5" stroke="#202124" stroke-width="2.6"/><path d="M874.5,223.2 L883.5,232.2 L874.5,241.2 M884.3,223.2 L893.3,232.2 L884.3,241.2" fill="none" stroke="#7a7b7e" stroke-width="3"/><path d="M123.9,292 H142.5 L133.20000000000002,305 Z" fill="#5f6368"/><path d="M154,342.1 H172.6 L163.3,355.1 Z" fill="#5f6368"/><path d="M154,442.1 H172.6 L163.3,455.1 Z" fill="#5f6368"/><path d="M187.1,488.2 L200.4,497.2 L187.1,506.2 Z" fill="#5f6368"/><path d="M187.1,538.2 L200.4,547.2 L187.1,556.2 Z" fill="#5f6368"/><path d="M123.9,592.3 H142.5 L133.20000000000002,605.3 Z" fill="#5f6368"/><path d="M154.1,642.2 H172.7 L163.4,655.2 Z" fill="#5f6368"/><path d="M164.7,288.5 L153.7,297.4 L164.7,306.2 M180.7,288.5 L191.3,297.4 L180.7,306.2 M176.8,283.2 L168.6,311.6" fill="none" stroke="#555" stroke-width="3" stroke-linecap="round" stroke-linejoin="round"/><path transform="translate(179.6,332.1)" d="M10,27.7 H35.5 A7.1,7.1 0 1 0 33.9,13.7 A11.4,11.4 0 0 0 11.7,10.9 A8.6,8.6 0 1 0 10,27.7 Z" fill="none" stroke="#555" stroke-width="2.8"/><path transform="translate(179.6,432.1)" d="M10,27.7 H35.5 A7.1,7.1 0 1 0 33.9,13.7 A11.4,11.4 0 0 0 11.7,10.9 A8.6,8.6 0 1 0 10,27.7 Z" fill="none" stroke="#555" stroke-width="2.8"/><path d="M219,377.1 H234.6 L246.9,389.5 V415 a2,2 0 0 1 -2,2 H219 a2,2 0 0 1 -2,-2 V379.1 a2,2 0 0 1 2,-2 Z" fill="#e2b52f"/><path d="M234.6,377.1 V389.5 H246.9 Z" fill="#dcdddf"/><path d="M219,484.4 H231.7 L236,489.09999999999997 H249.7 a2,2 0 0 1 2,2 V511.79999999999995 a2,2 0 0 1 -2,2 H219 a2,2 0 0 1 -2,-2 V486.4 a2,2 0 0 1 2,-2 Z" fill="#e66f22"/><path d="M219,534.4 H231.7 L236,539.1 H249.7 a2,2 0 0 1 2,2 V561.8 a2,2 0 0 1 -2,2 H219 a2,2 0 0 1 -2,-2 V536.4 a2,2 0 0 1 2,-2 Z" fill="#e66f22"/><path d="M156.4,588.7 L172.7,582.2 L188.7,589 L172,595.5 Z M155.3,592.1 L170.8,599.3 V615.6 L155.3,608.4 Z M174.2,598.2 L189,592.5 V608.4 L174.2,615.6 Z" fill="#545454"/><path d="M191,632 H217 a4,4 0 0 1 4,4 V657.6 a4,4 0 0 1 -4,4 H191 a4,4 0 0 1 -4,-4 V636 a4,4 0 0 1 4,-4 Z M190.5,639.3 V658.2 H217.6 V639.3 Z" fill="#545454" fill-rule="evenodd"/><rect x="1202.1" y="219.4" width="7.5" height="25.3" fill="#1a73e8"/><path d="M1214.2,219.4 V244.7 L1233.8,231.9 Z" fill="#1a73e8"/><path d="M1232,257.5 H1244.7 V245.2 Z" fill="#6d6e71"/><path d="M1271.5,239.5 A17,17 0 0 1 1303.5,233.5" fill="none" stroke="#6d6e71" stroke-width="6.4"/><path d="M1295.4,237.4 L1311.8,231.9 L1305.4,243.8 Z" fill="#6d6e71"/><circle cx="1287.2" cy="238" r="5" fill="#6d6e71"/><rect x="1354.3" y="216.9" width="7.7" height="11" fill="#6d6e71"/><path d="M1347,227.4 H1368.9 L1357.9,236.9 Z" fill="#6d6e71"/><circle cx="1357.9" cy="244.4" r="5" fill="#6d6e71"/><rect x="1424.5" y="226" width="7.5" height="10.5" fill="#6d6e71"/><path d="M1417.1,226.6 H1439.1 L1428.1,217.1 Z" fill="#6d6e71"/><circle cx="1428.1" cy="244.3" r="5" fill="#6d6e71"/><rect x="1479.5" y="227" width="11" height="7.1" fill="#6d6e71"/><path d="M1489.8,219.2 L1499.1,230.6 L1489.8,241.6 Z" fill="#6d6e71"/><circle cx="1506.5" cy="230.6" r="4.8" fill="#6d6e71"/><rect x="1542" y="212" width="3" height="40" fill="#cbcdd1"/><path d="M1566.2,222 H1583.9 L1571.8,241.9 H1566.2 Z M1584.6,241.9 L1595.3,222 H1601.6 L1611.6,231.7 L1601.6,241.9 Z" fill="#6d6e71"/><path d="M1598.1,212.1 L1571.1,251.1" stroke="#6d6e71" stroke-width="5"/><path d="M1652.5,214.2 H1667.2 L1677.6,224.6 V239.3 L1667.2,249.7 H1652.5 L1642.1,239.3 V224.6 Z" fill="#6d6e71"/><rect x="1652" y="224.2" width="5.7" height="15.6" fill="#fff"/><rect x="1662" y="224.2" width="5.7" height="15.6" fill="#fff"/><path d="M1192.2,286.3 H1208.5 L1200.3500000000001,300.5 Z" fill="#5f6368"/><path d="M1192.2,441.5 H1208.5 L1200.3500000000001,455.7 Z" fill="#5f6368"/><path d="M1189.5,495 H1205.5 L1197.5,509 Z" fill="#5f6368"/><path d="M1211,652 L1224,660.5 L1211,669 Z" fill="#5f6368"/><g fill="none" stroke="#5f6368" stroke-width="2.2"><rect x="1404" y="649" width="24.5" height="17" rx="2"/></g><path d="M1410,653 V662 M1416,653 V662 M1422,653 V662 M1407,645.5 V649 M1413,645.5 V649 M1419,645.5 V649 M1425,645.5 V649 M1407,666 V669.5 M1413,666 V669.5 M1419,666 V669.5 M1425,666 V669.5" stroke="#5f6368" stroke-width="2"/><circle cx="153.2" cy="715.6" r="3.8" fill="#6d6e71"/><circle cx="153.2" cy="727.8" r="3.8" fill="#6d6e71"/><circle cx="153.2" cy="740.5" r="3.8" fill="#6d6e71"/><path d="M631,720.5 L645.5,735 M645.5,720.5 L631,735" stroke="#202124" stroke-width="2.6"/><path d="M332.5,788 L347,802.5 M347,788 L332.5,802.5" stroke="#202124" stroke-width="2.6"/><path d="M150.8,870.2 L143.2,878.1 L150.8,885.4 M143.2,878.1 H157.5 A7.5,7.5 0 0 1 157.5,893 H146.2" fill="none" stroke="#5f6368" stroke-width="3.4"/><path d="M208.6,870.2 L216.2,878.1 L208.6,885.4 M216.2,878.1 H201.4 A7.5,7.5 0 0 0 201.4,893 H213.2" fill="none" stroke="#d3d5d8" stroke-width="3.4"/><path d="M297.3,873.8 L288,882.6 L297.3,891.5" fill="none" stroke="#5f6368" stroke-width="3.4"/><path d="M707,873.3 L716.5,882.1 L707,891.1" fill="none" stroke="#5f6368" stroke-width="3.4"/><path transform="translate(775.2,858.9) scale(2)" d="M17.65 6.35C16.2 4.9 14.21 4 12 4c-4.42 0-7.99 3.58-7.99 8s3.57 8 7.99 8c3.73 0 6.84-2.55 7.730-6h-2.08c-.82 2.33-3.04 4-5.65 4-3.31 0-6-2.690-6-6s2.69-6 6-6c1.66 0 3.14.69 4.22 1.78L13 11h7V4l-2.35 2.35z" fill="#5f6368"/><path d="M1093,859.5 L1102.9,870.5 L1112.8,859.5" fill="none" stroke="#202124" stroke-width="2.2"/><path d="M1204,951 L1213.5,961 L1223,951" fill="none" stroke="#5f6368" stroke-width="2"/><path d="M1204,1023.5 L1213.5,1033.5 L1223,1023.5" fill="none" stroke="#5f6368" stroke-width="2"/><path d="M1204,1096 L1213.5,1106 L1223,1096" fill="none" stroke="#5f6368" stroke-width="2"/><path d="M1204,1169 L1213.5,1179 L1223,1169" fill="none" stroke="#5f6368" stroke-width="2"/><path d="M1204,1242 L1213.5,1252 L1223,1242" fill="none" stroke="#5f6368" stroke-width="2"/><path d="M1204,1315 L1213.5,1325 L1223,1315" fill="none" stroke="#5f6368" stroke-width="2"/><rect x="1341.5" y="1373.5" width="49" height="49" fill="#e8eaed"/><circle cx="1365.3" cy="1397.6" r="14" fill="none" stroke="#1a73e8" stroke-width="2.5"/><path d="M1357,1397.6 H1373 M1366.5,1390.5 L1373.5,1397.6 L1366.5,1404.7" fill="none" stroke="#1a73e8" stroke-width="2.5"/></svg><div style="left:112px;top:670px;width:413px;height:22px;overflow:hidden"><svg style="position:absolute;left:-112px;top:-670px" width="1972" height="1580"><path transform="translate(209.6,684.5)" d="M10,27.7 H35.5 A7.1,7.1 0 1 0 33.9,13.7 A11.4,11.4 0 0 0 11.7,10.9 A8.6,8.6 0 1 0 10,27.7 Z" fill="none" stroke="#555" stroke-width="2.8"/></svg></div></div></div><div style="left:193.4px;top:360px;width:278.6px;height:76.7px;border:9.8px solid #0433ff;border-radius:23px;box-shadow:0 2px 5px rgba(0,0,0,.35), inset 0 2px 4px rgba(0,0,0,.18)"></div><div style="left:1189.5px;top:626.6px;width:268.5px;height:71px;border:9.8px solid #0433ff;border-radius:23px;box-shadow:0 2px 5px rgba(0,0,0,.35), inset 0 2px 4px rgba(0,0,0,.18)"></div><div style="left:1377px;top:680px;width:468px;height:263px;background:#535353;border:1px solid #1e1e1e;border-radius:12px;box-shadow:inset 0 0 0 1px #737373, 0 6px 18px rgba(0,0,0,.35)"></div><div style="left:1388px;top:845px;width:446px;height:43px;background:#3f86e0;border-radius:6px"></div><div style="left:1406px;top:789px;width:410px;height:2px;background:#6f6f6f"></div><div style="left:1405px;top:700.02px;font:400 27.5px/27.5px 'Liberation Sans',sans-serif;color:#f2f2f2;white-space:pre;">Copy property path</div><div style="left:1405px;top:744.02px;font:400 27.5px/27.5px 'Liberation Sans',sans-serif;color:#f2f2f2;white-space:pre;">Copy object</div><div style="left:1405px;top:810.14px;font:400 27.6px/27.6px 'Liberation Sans',sans-serif;color:#f2f2f2;white-space:pre;">Add property path to watch</div><div style="left:1405px;top:854.81px;font:400 26.8px/26.8px 'Liberation Sans',sans-serif;color:#f2f2f2;white-space:pre;">Reveal in Memory Inspector panel</div><div style="left:1405px;top:898.56px;font:400 27.1px/27.1px 'Liberation Sans',sans-serif;color:#f2f2f2;white-space:pre;">Store object as global variable</div>
</body></html>
